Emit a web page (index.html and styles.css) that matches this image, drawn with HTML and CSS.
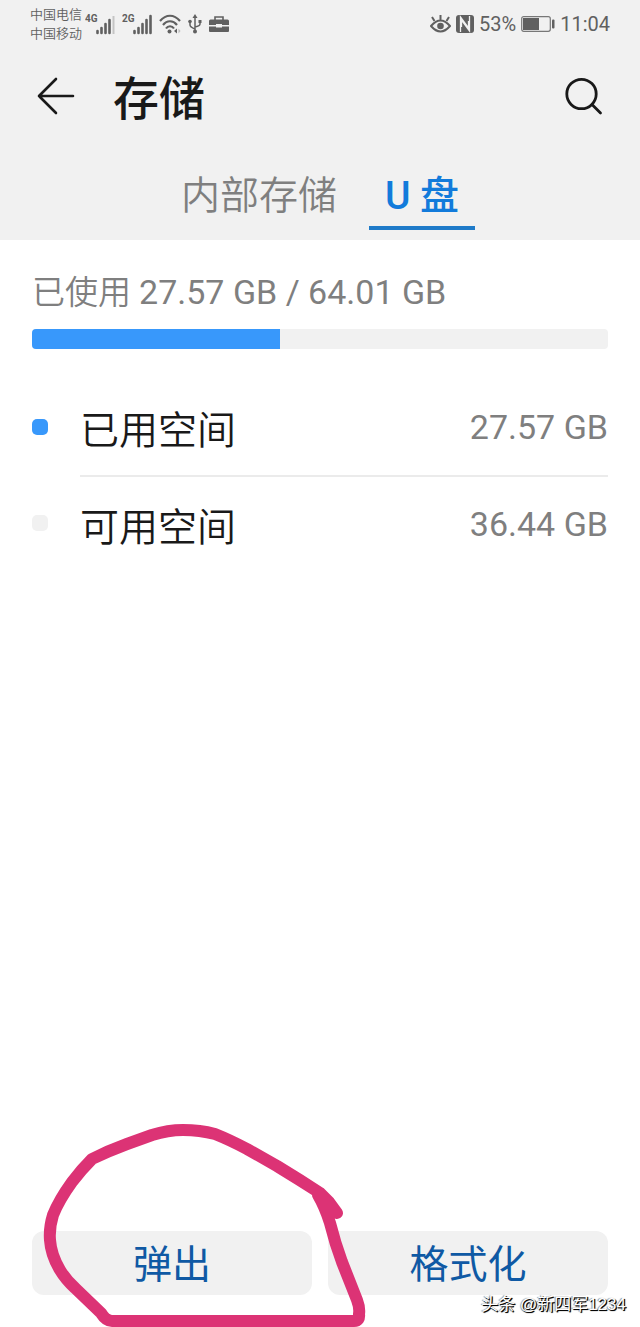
FILE: index.html
```html
<!DOCTYPE html>
<html lang="zh-CN">
<head>
	<meta charset="UTF-8">
	<meta name="viewport" content="width=device-width, initial-scale=1">
	<title>存储</title>
	<link rel="stylesheet" href="styles.css">
</head>
<body>
	<header class="top">
		<div class="status">
			<div class="carrier">
				<p>中国电信</p>
				<p>中国移动</p>
			</div>
			<div class="signals">
				<svg width="30" height="24" viewBox="0 0 30 24">
					<text class="net" x="0" y="10">4G</text>
					<path d="M12.500 19v2M16.500 16v5M20.500 12v9M24.500 8v13" stroke="#606060" stroke-width="2.600" stroke-linecap="round"/>
					<path d="M28.500 4v18" stroke="#c4c4c4" stroke-width="2"/>
				</svg>
				<svg width="30" height="24" viewBox="0 0 30 24">
					<text class="net" x="0" y="10">2G</text>
					<path d="M12.500 19v2M16.500 16v5M20.500 12v9M24.500 8v13M28.500 4v17" stroke="#606060" stroke-width="2.600" stroke-linecap="round"/>
				</svg>
				<svg width="22" height="20" viewBox="0 0 22 20" fill="none" stroke="#606060" stroke-width="2.200">
					<path d="M1 7C7 0 15 0 21 7M4 11c4-5 10-5 14 0M7 14.500c2-3 6-3 8 0"/>
					<circle cx="10.500" cy="17.500" r="2" fill="#606060" stroke="none"/>
					<path d="M18 14.500v5l-3-2.500z" fill="#606060" stroke="none"/>
					<path d="M19.500 14.500l2 2.500-2 2.500z" fill="#bbb" stroke="none"/>
				</svg>
				<svg width="14" height="20" viewBox="0 0 14 20" fill="none" stroke="#606060" stroke-width="1.500">
					<path d="M7 3v14M2 8v3q0 2 5 4M12 8v2q0 2-5 3"/>
					<path d="M7 0l2.500 4h-5zM10.500 6h3v3h-3z" fill="#606060" stroke="none"/>
					<circle cx="2" cy="7.500" r="1.800" fill="#606060" stroke="none"/>
					<circle cx="7" cy="17.500" r="2" fill="#606060" stroke="none"/>
				</svg>
				<svg width="20" height="18" viewBox="0 0 20 18" fill="#606060">
					<path d="M6 5V2h8v3" fill="none" stroke="#606060" stroke-width="1.600"/>
					<path d="M1.500 4.500h17q1.500 0 1.500 1.500v4h-7V9H7v1H0V6q0-1.500 1.500-1.500zM0 11.500h7v1h6v-1h7V16q0 1-1 1H1q-1 0-1-1z"/>
				</svg>
			</div>
			<div class="right">
				<svg width="21" height="18" viewBox="0 0 21 18" fill="none" stroke="#606060" stroke-width="2">
					<path d="M1 11q9.500-11 19 0-9.500 11-19 0zM10.500 5V0M4.500 6L2 2M16.500 6L19 2"/>
					<circle cx="10.500" cy="11" r="3.300" fill="#606060" stroke="none"/>
				</svg>
				<svg width="18" height="18" viewBox="0 0 18 18">
					<rect width="18" height="18" rx="3" fill="#606060"/>
					<path d="M4.500 17V2l8 11V6M13.500 1v15l-8-11v7" fill="none" stroke="#f1f1f1" stroke-width="1.300"/>
				</svg>
				<span>53%</span>
				<svg class="battery" width="34" height="16" viewBox="0 0 34 16">
					<rect x=".7" y=".7" width="28.600" height="14.600" rx="2" fill="none" stroke="#777" stroke-width="1.200"/>
					<rect x="2" y="2" width="16" height="12" fill="#606060"/>
					<rect x="31" y="3.500" width="2.500" height="9" rx="1" fill="#606060"/>
				</svg>
				<span>11:04</span>
			</div>
		</div>
		<div class="title-bar">
			<button class="icon-btn" aria-label="返回">
				<svg width="38" height="38" viewBox="0 0 38 38" fill="none" stroke="#191919" stroke-width="2.600" stroke-linecap="round" stroke-linejoin="round">
					<path d="M36 19H2M19 2L2 19l17 17"/>
				</svg>
			</button>
			<h1>存储</h1>
			<button class="icon-btn" aria-label="搜索">
				<svg width="38" height="38" viewBox="0 0 38 38" fill="none" stroke="#191919" stroke-width="2.800" stroke-linecap="round">
					<circle cx="16.500" cy="17" r="14.700"/>
					<path d="M27 27.500l8.500 8.500"/>
				</svg>
			</button>
		</div>
		<nav class="tabs">
			<a href="#internal">内部存储</a>
			<a class="active" href="#usb">U 盘</a>
		</nav>
	</header>

	<main class="content">
		<p class="summary">已使用 <span>27.57 GB / 64.01 GB</span></p>
		<div class="bar"><div class="used" style="width: 43.07%"></div></div>
		<ul class="list">
			<li>
				<i class="dot blue"></i>
				<div class="row"><span>已用空间</span><span class="size">27.57 GB</span></div>
			</li>
			<li>
				<i class="dot"></i>
				<div class="row"><span>可用空间</span><span class="size">36.44 GB</span></div>
			</li>
		</ul>
	</main>

	<footer class="actions">
		<button>弹出</button>
		<button>格式化</button>
		<svg class="mark" width="330" height="207" viewBox="0 0 330 207" fill="none" stroke="#dc3375" stroke-width="12" stroke-linecap="round" stroke-linejoin="round">
			<path d="M297 93L289 82 280 73Q260 60 237 46L207 29Q190 20 175 14 160 10 143 10 128 10 112 15L87 24Q68 31 52 39 41 50 32 62 19 80 13 95 9 108 10 120 11 135 20 150 26 160 35 168L61 193Q66 201 72 201H314Q320 201 319 194 320 188 317 180L302 142Q295 123 290 103 285 87 278 75L289 88"/>
		</svg>
		<p class="sign">头条 @新四军1234</p>
	</footer>
</body>
</html>
```
FILE: styles.css
```css
*{
	margin: 0;
	padding: 0;
	box-sizing: border-box;
}
body{
	min-height: 100vh;
	display: flex;
	flex-direction: column;
	background: #fff;
	color: #191919;
	font-family: Roboto, "Noto Sans CJK SC", sans-serif;
}
button{
	border: none;
	background: none;
	font-family: inherit;
	cursor: pointer;
}
svg{
	display: block;
	flex: none;
}
.top{
	background: #f1f1f1;
}
.status{
	height: 48px;
	padding: 0 30px;
	display: flex;
	align-items: center;
	color: #606060;
}
.carrier{
	font-size: 13px;
	line-height: 19px;
	font-weight: 350;
}
.signals{
	display: flex;
	align-items: center;
	gap: 7px;
	margin-left: 3px;
}
.net{
	font-size: 10px;
	font-weight: 700;
	fill: #606060;
}
.right{
	display: flex;
	align-items: center;
	gap: 5px;
	margin-left: auto;
	font-size: 20px;
}
.title-bar{
	height: 96px;
	padding: 0 37px;
	display: flex;
	align-items: center;
}
.icon-btn{
	width: 38px;
	height: 38px;
}
.title-bar h1{
	flex: 1;
	margin-left: 38px;
	padding-top: 6px;
	font-size: 46px;
	line-height: 64px;
	font-weight: 500;
}
.tabs{
	height: 96px;
	padding-bottom: 10px;
	display: flex;
	justify-content: center;
	align-items: flex-end;
	gap: 16px;
}
.tabs a{
	padding: 0 16px;
	height: 64px;
	font-size: 39px;
	line-height: 60px;
	font-weight: 350;
	color: #7f7f7f;
	text-decoration: none;
}
.tabs .active{
	color: #127bdb;
	font-weight: 500;
	border-bottom: 4px solid #1f7bc9;
}
.content{
	flex: 1;
	padding: 28px 32px;
}
.summary{
	font-size: 33px;
	line-height: 48px;
	font-weight: 350;
	color: #7f7f7f;
}
.summary span{
	font-size: 34px;
	font-weight: 400;
}
.bar{
	height: 20px;
	margin-top: 12px;
	border-radius: 4px;
	background: #f1f1f1;
	overflow: hidden;
}
.used{
	height: 100%;
	background: #3898fb;
}
.list{
	list-style: none;
	margin-top: 30px;
}
.list li{
	display: flex;
	align-items: center;
	gap: 32px;
}
.dot{
	width: 16px;
	height: 16px;
	border-radius: 5px;
	background: #f1f1f1;
}
.blue{
	background: #3898fb;
}
.row{
	flex: 1;
	height: 96px;
	display: flex;
	justify-content: space-between;
	align-items: center;
	font-size: 39px;
	font-weight: 350;
}
.list li + li .row{
	border-top: 2px solid #ebebeb;
}
.row .size{
	font-size: 34px;
	font-weight: 400;
	color: #7f7f7f;
}
.actions{
	position: relative;
	display: flex;
	gap: 16px;
	padding: 32px;
}
.actions button{
	flex: 1;
	height: 64px;
	padding-top: 4px;
	border-radius: 12px;
	background: #f1f1f1;
	color: #0f59a4;
	font-size: 39px;
	line-height: 60px;
	font-weight: 400;
}
.mark{
	position: absolute;
	left: 40px;
	bottom: 0;
	pointer-events: none;
}
.sign{
	position: absolute;
	right: 14px;
	bottom: 10px;
	font-family: "Liberation Sans", "Noto Sans CJK SC", sans-serif;
	font-size: 17px;
	line-height: 24px;
	color: #fff;
	text-shadow: 1px 1px 1px #000, 1px 1px 0 #222, -1px 0 1px #888;
}
```
